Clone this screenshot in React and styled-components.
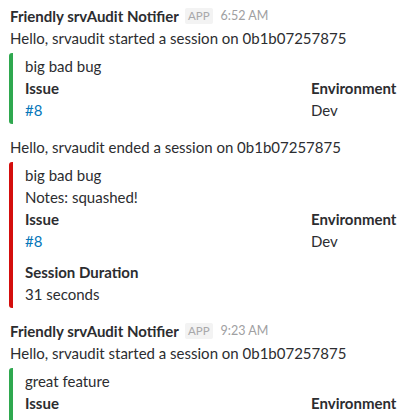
import React from 'react';
import styled, { createGlobalStyle } from 'styled-components';

const Global = createGlobalStyle`
  body {
    margin: 0;
    background: #fff;
    font-family: Lato, "Noto Sans", sans-serif;
    font-size: 15px;
    line-height: 22px;
    color: #2c2d30;
    overflow: hidden;
  }
`;

const Feed = styled.div`
  padding: 5px 0 0 10px;
  width: 700px;
`;

const Message = styled.div`
  margin-bottom: ${p => p.gap}px;
`;

const Header = styled.div`
  display: flex;
  align-items: center;
  height: 22px;
`;

const Sender = styled.span`
  font-weight: 700;
  color: #2c2d30;
`;

const Badge = styled.span`
  margin-left: 6px;
  padding: 0 3px;
  background: #f3f3f3;
  color: #a8a8aa;
  font-size: 11.5px;
  line-height: 16px;
  border-radius: 2px;
`;

const Time = styled.span`
  margin-left: 8px;
  color: #a0a0a2;
  font-size: 12.5px;
`;

const Attachment = styled.div`
  margin-top: 4px;
  border-left: 4px solid ${p => p.color};
  border-radius: 3px;
  padding: 2px 0 3px 12px;
  margin-left: -1px;
`;

const Fields = styled.div`
  display: grid;
  grid-template-columns: 286px 286px;
`;

const Field = styled.div`
  margin-bottom: ${p => (p.gap ? '9px' : '0')};
`;

const FieldTitle = styled.div`
  font-weight: 700;
`;

const Link = styled.a`
  color: #0576b9;
  text-decoration: none;
`;

const Meta = ({ time }) => (
  <Header>
    <Sender>Friendly srvAudit Notifier</Sender>
    <Badge>APP</Badge>
    <Time>{time}</Time>
  </Header>
);

export default function App() {
  return (
    <Feed>
      <Global />
      <Message gap={12}>
        <Meta time="6:52 AM" />
        <div>Hello, srvaudit started a session on 0b1b07257875</div>
        <Attachment color="#2fa84f">
          <div>big bad bug</div>
          <Fields>
            <Field>
              <FieldTitle>Issue</FieldTitle>
              <Link>#8</Link>
            </Field>
            <Field>
              <FieldTitle>Environment</FieldTitle>
              <div>Dev</div>
            </Field>
          </Fields>
        </Attachment>
      </Message>
      <Message gap={12}>
        <div>Hello, srvaudit ended a session on 0b1b07257875</div>
        <Attachment color="#d40e0d">
          <div>big bad bug</div>
          <div>Notes: squashed!</div>
          <Fields>
            <Field gap>
              <FieldTitle>Issue</FieldTitle>
              <Link>#8</Link>
            </Field>
            <Field gap>
              <FieldTitle>Environment</FieldTitle>
              <div>Dev</div>
            </Field>
            <Field>
              <FieldTitle>Session Duration</FieldTitle>
              <div>31 seconds</div>
            </Field>
          </Fields>
        </Attachment>
      </Message>
      <Message gap={0}>
        <Meta time="9:23 AM" />
        <div>Hello, srvaudit started a session on 0b1b07257875</div>
        <Attachment color="#2fa84f">
          <div>great feature</div>
          <Fields>
            <Field>
              <FieldTitle>Issue</FieldTitle>
              <Link>#8</Link>
            </Field>
            <Field>
              <FieldTitle>Environment</FieldTitle>
              <div>Dev</div>
            </Field>
          </Fields>
        </Attachment>
      </Message>
    </Feed>
  );
}
